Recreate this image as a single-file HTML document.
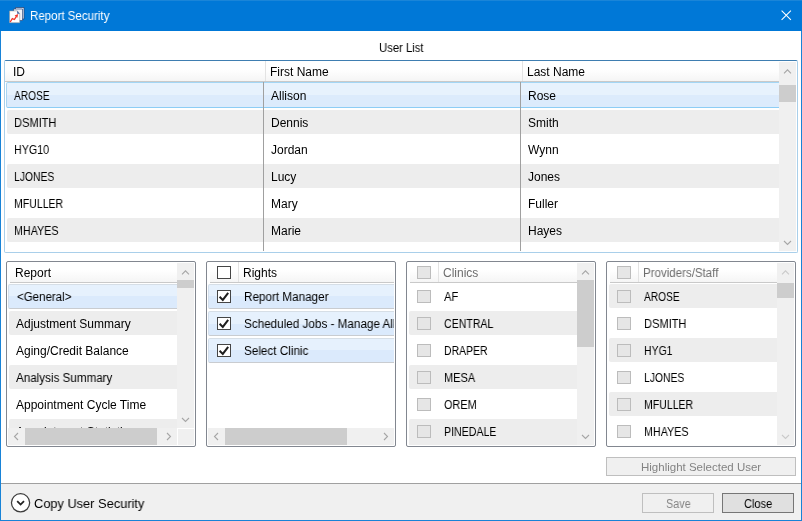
<!DOCTYPE html>
<html><head><meta charset="utf-8">
<style>
*{margin:0;padding:0;box-sizing:border-box}
html,body{width:802px;height:521px;overflow:hidden;background:#fff}
body{position:relative;font-family:"Liberation Sans",sans-serif;font-size:12px;color:#000}
.a{position:absolute}
.t{position:absolute;white-space:nowrap;will-change:transform;line-height:12px;font-size:12px;transform-origin:0 50%}
.gsel{position:absolute;border-top:1px solid #A3D6F5;border-bottom:1px solid #8DCDF5;border-left:1px solid #A9D5F2;background:linear-gradient(#E7F2FD,#E7F2FD 50%,#DCEBFC 50%,#DCEBFC);border-radius:2px 0 0 2px}
.psel{position:absolute;border:1px solid;border-color:#D6DEE6 #DAE6F2 #C9CCD0 #D3DFEC;background:linear-gradient(#E6F1FD,#E6F1FD 50%,#DBEAFC 50%,#DBEAFC);border-radius:2px}
.gry{position:absolute;background:#EDEDED;border-radius:2px}
.sb{position:absolute;background:#F0F0F0}
.th{position:absolute;background:#CDCDCD}
.pn{position:absolute;border:1px solid #828790;border-radius:2px}
.clip{position:absolute;overflow:hidden}
.hdr{position:absolute;background:linear-gradient(#fff,#fff 40%,#F5F5F5);border-bottom:1px solid #C9C9C9}
.cb{position:absolute;width:14px;height:13px;border:1px solid #454545;background:#fff}
.cbd{position:absolute;width:14px;height:13px;border:1px solid #BCBCBC;background:#E6E6E6}
</style></head><body>
<div class="a" style="left:0px;top:0px;width:802px;height:31px;background:#0078D7;"></div>
<div class="a" style="left:0px;top:0px;width:802px;height:1px;background:#1A85D8;"></div>
<div class="a" style="left:0px;top:31px;width:1px;height:490px;background:#1883D7;"></div>
<div class="a" style="left:801px;top:31px;width:1px;height:490px;background:#1883D7;"></div>
<div class="a" style="left:0px;top:520px;width:802px;height:1px;background:#1883D7;"></div>
<svg class="a" style="left:7px;top:5px" width="20" height="20" viewBox="0 0 20 20">
  <path d="M8.5 2.5 H17 V14 H8.5 Z" fill="#E6EAF4" stroke="#233D6B" stroke-width="0.7"/>
  <path d="M6.5 4 H15.5 V15.5 H6.5 Z" fill="#EEF1F8" stroke="#2D4A7E" stroke-width="0.7"/>
  <path d="M2.6 5.9 H10.3 L12.7 8.7 V17.7 H2.6 Z" fill="#fff" stroke="#9A9A9A" stroke-width="0.6"/>
  <path d="M10.2 5.8 L12.8 8.8 H10.2 Z" fill="#3D5E9E"/>
  <path d="M3.2 17 L5.3 13.6 L7.4 14.5 L9.4 11.3" fill="none" stroke="#F2372C" stroke-width="1.3"/>
  <path d="M7.6 10.4 L11.2 9 L10.4 12.8 Z" fill="#F2372C"/>
</svg>
<div class="t" style="left:30px;top:10px;color:#fff;transform:scaleX(0.96)">Report Security</div>
<svg class="a" style="left:781px;top:10px" width="11" height="11" viewBox="0 0 11 11"><path d="M0.6 0.6 L9.9 9.9 M9.9 0.6 L0.6 9.9" stroke="#fff" stroke-width="1.05"/></svg>
<div class="t" style="left:379px;top:42px;transform:scaleX(0.94)">User List</div>
<div class="a" style="left:4px;top:60px;width:794px;height:193px;border:1px solid;border-color:#3F7EB1 #A9CFEA #A9CFEA #A9CFEA;border-radius:2px"></div>
<div class="clip" style="left:5px;top:61px;width:774px;height:190px">
<div class="hdr" style="left:0px;top:0px;width:774px;height:21px;"></div>
<div class="a" style="left:260px;top:0px;width:1px;height:20px;background:#E3E3E3;"></div>
<div class="a" style="left:517px;top:0px;width:1px;height:20px;background:#E3E3E3;"></div>
<div class="t" style="left:8px;top:5px;">ID</div>
<div class="t" style="left:265px;top:5px;">First Name</div>
<div class="t" style="left:522px;top:5px;">Last Name</div>
<div class="gsel" style="left:1px;top:21px;width:780px;height:26px;"></div>
<div class="gry" style="left:2px;top:49px;width:780px;height:24px;"></div>
<div class="gry" style="left:2px;top:103px;width:780px;height:24px;"></div>
<div class="gry" style="left:2px;top:157px;width:780px;height:24px;"></div>
<div class="a" style="left:258px;top:21px;width:1px;height:169px;background:#A0A0A0;"></div>
<div class="a" style="left:515px;top:21px;width:1px;height:169px;background:#A0A0A0;"></div>
<div class="t" style="left:9px;top:29px;transform:scaleX(0.847);">AROSE</div>
<div class="t" style="left:266px;top:29px;">Allison</div>
<div class="t" style="left:523px;top:29px;">Rose</div>
<div class="t" style="left:9px;top:56px;transform:scaleX(0.922);">DSMITH</div>
<div class="t" style="left:266px;top:56px;">Dennis</div>
<div class="t" style="left:523px;top:56px;">Smith</div>
<div class="t" style="left:9px;top:83px;transform:scaleX(0.889);">HYG10</div>
<div class="t" style="left:266px;top:83px;">Jordan</div>
<div class="t" style="left:523px;top:83px;">Wynn</div>
<div class="t" style="left:9px;top:110px;transform:scaleX(0.861);">LJONES</div>
<div class="t" style="left:266px;top:110px;">Lucy</div>
<div class="t" style="left:523px;top:110px;">Jones</div>
<div class="t" style="left:9px;top:137px;transform:scaleX(0.878);">MFULLER</div>
<div class="t" style="left:266px;top:137px;">Mary</div>
<div class="t" style="left:523px;top:137px;">Fuller</div>
<div class="t" style="left:9px;top:164px;transform:scaleX(0.894);">MHAYES</div>
<div class="t" style="left:266px;top:164px;">Marie</div>
<div class="t" style="left:523px;top:164px;">Hayes</div>
</div>
<div class="sb" style="left:779px;top:62px;width:17px;height:189px;"></div>
<div class="th" style="left:779px;top:85px;width:17px;height:17px;"></div>
<svg class="a" style="left:782px;top:67px" width="11" height="8"><path d="M2 6.3 L5.5 2.8 L9 6.3" fill="none" stroke="#A6A6A6" stroke-width="1.1"/></svg>
<svg class="a" style="left:782px;top:239px" width="11" height="8"><path d="M2 2 L5.5 5.5 L9 2" fill="none" stroke="#A6A6A6" stroke-width="1.1"/></svg>
<div class="pn" style="left:6px;top:261px;width:190px;height:186px;"></div>
<div class="pn" style="left:206px;top:261px;width:190px;height:186px;"></div>
<div class="pn" style="left:406px;top:261px;width:190px;height:186px;"></div>
<div class="pn" style="left:606px;top:261px;width:190px;height:186px;"></div>
<div class="clip" style="left:7px;top:262px;width:170px;height:166px">
<div class="hdr" style="left:3px;top:0px;width:167px;height:21px;"></div>
<div class="psel" style="left:1px;top:22px;width:175px;height:25px;"></div>
<div class="gry" style="left:2px;top:49px;width:175px;height:24px;"></div>
<div class="gry" style="left:2px;top:103px;width:175px;height:24px;"></div>
<div class="gry" style="left:2px;top:157px;width:175px;height:24px;"></div>
<div class="t" style="left:8px;top:5px;">Report</div>
<div class="t" style="left:10px;top:29px;transform:scaleX(0.96)">&lt;General&gt;</div>
<div class="t" style="left:9px;top:56px;">Adjustment Summary</div>
<div class="t" style="left:9px;top:83px;">Aging/Credit Balance</div>
<div class="t" style="left:9px;top:110px;transform:scaleX(0.97)">Analysis Summary</div>
<div class="t" style="left:9px;top:137px;">Appointment Cycle Time</div>
<div class="t" style="left:9px;top:164px;">Appointment Statistics</div>
</div>
<div class="sb" style="left:177px;top:263px;width:17px;height:165px;"></div>
<div class="th" style="left:177px;top:280px;width:17px;height:8px;"></div>
<svg class="a" style="left:180px;top:268px" width="11" height="8"><path d="M2 6.3 L5.5 2.8 L9 6.3" fill="none" stroke="#A6A6A6" stroke-width="1.1"/></svg>
<svg class="a" style="left:180px;top:416px" width="11" height="8"><path d="M2 2 L5.5 5.5 L9 2" fill="none" stroke="#A6A6A6" stroke-width="1.1"/></svg>
<div class="sb" style="left:8px;top:428px;width:169px;height:17px;"></div>
<div class="th" style="left:25px;top:428px;width:132px;height:17px;"></div>
<svg class="a" style="left:12px;top:431px" width="8" height="11"><path d="M6 2 L2.5 5.5 L6 9" fill="none" stroke="#A6A6A6" stroke-width="1.1"/></svg>
<svg class="a" style="left:165px;top:431px" width="8" height="11"><path d="M2 2 L5.5 5.5 L2 9" fill="none" stroke="#A6A6A6" stroke-width="1.1"/></svg>
<div class="sb" style="left:178px;top:429px;width:16px;height:16px;"></div>
<div class="clip" style="left:207px;top:262px;width:187px;height:166px">
<div class="hdr" style="left:3px;top:0px;width:184px;height:21px;"></div>
<div class="cb" style="left:10px;top:4px;width:14px;height:13px;"></div>
<div class="a" style="left:31px;top:0px;width:1px;height:20px;background:#E3E3E3;"></div>
<div class="t" style="left:36px;top:5px;">Rights</div>
<div class="psel" style="left:1px;top:22px;width:195px;height:25px;"></div>
<div class="cb" style="left:10px;top:28px;width:14px;height:13px;"></div>
<svg class="a" style="left:10px;top:28px" width="14" height="13"><path d="M2.6 6.8 L5.8 9.9 L11.2 2.8" fill="none" stroke="#1E1E1E" stroke-width="2"/></svg>
<div class="t" style="left:37px;top:29px;transform:scaleX(0.975)">Report Manager</div>
<div class="psel" style="left:1px;top:49px;width:195px;height:25px;"></div>
<div class="cb" style="left:10px;top:55px;width:14px;height:13px;"></div>
<svg class="a" style="left:10px;top:55px" width="14" height="13"><path d="M2.6 6.8 L5.8 9.9 L11.2 2.8" fill="none" stroke="#1E1E1E" stroke-width="2"/></svg>
<div class="t" style="left:37px;top:56px;transform:scaleX(0.975)">Scheduled Jobs - Manage All</div>
<div class="psel" style="left:1px;top:76px;width:195px;height:25px;"></div>
<div class="cb" style="left:10px;top:82px;width:14px;height:13px;"></div>
<svg class="a" style="left:10px;top:82px" width="14" height="13"><path d="M2.6 6.8 L5.8 9.9 L11.2 2.8" fill="none" stroke="#1E1E1E" stroke-width="2"/></svg>
<div class="t" style="left:37px;top:83px;transform:scaleX(0.975)">Select Clinic</div>
</div>
<div class="sb" style="left:208px;top:428px;width:186px;height:17px;"></div>
<div class="th" style="left:225px;top:428px;width:122px;height:17px;"></div>
<svg class="a" style="left:212px;top:431px" width="8" height="11"><path d="M6 2 L2.5 5.5 L6 9" fill="none" stroke="#A6A6A6" stroke-width="1.1"/></svg>
<svg class="a" style="left:382px;top:431px" width="8" height="11"><path d="M2 2 L5.5 5.5 L2 9" fill="none" stroke="#A6A6A6" stroke-width="1.1"/></svg>
<div class="clip" style="left:407px;top:262px;width:170px;height:183px">
<div class="hdr" style="left:3px;top:0px;width:167px;height:21px;"></div>
<div class="cbd" style="left:10px;top:4px;width:14px;height:13px;"></div>
<div class="a" style="left:31px;top:0px;width:1px;height:20px;background:#E3E3E3;"></div>
<div class="t" style="left:36px;top:5px;color:#6D6D6D">Clinics</div>
<div class="gry" style="left:2px;top:49px;width:175px;height:24px;"></div>
<div class="gry" style="left:2px;top:103px;width:175px;height:24px;"></div>
<div class="gry" style="left:2px;top:157px;width:175px;height:30px;"></div>
<div class="cbd" style="left:10px;top:28px;width:14px;height:13px;"></div>
<div class="t" style="left:37px;top:29px;transform:scaleX(0.932);">AF</div>
<div class="cbd" style="left:10px;top:55px;width:14px;height:13px;"></div>
<div class="t" style="left:37px;top:56px;transform:scaleX(0.882);">CENTRAL</div>
<div class="cbd" style="left:10px;top:82px;width:14px;height:13px;"></div>
<div class="t" style="left:37px;top:83px;transform:scaleX(0.872);">DRAPER</div>
<div class="cbd" style="left:10px;top:109px;width:14px;height:13px;"></div>
<div class="t" style="left:37px;top:110px;transform:scaleX(0.917);">MESA</div>
<div class="cbd" style="left:10px;top:136px;width:14px;height:13px;"></div>
<div class="t" style="left:37px;top:137px;transform:scaleX(0.908);">OREM</div>
<div class="cbd" style="left:10px;top:163px;width:14px;height:13px;"></div>
<div class="t" style="left:37px;top:164px;transform:scaleX(0.883);">PINEDALE</div>
</div>
<div class="sb" style="left:577px;top:263px;width:17px;height:182px;"></div>
<div class="th" style="left:577px;top:280px;width:17px;height:67px;"></div>
<svg class="a" style="left:580px;top:268px" width="11" height="8"><path d="M2 6.3 L5.5 2.8 L9 6.3" fill="none" stroke="#A6A6A6" stroke-width="1.1"/></svg>
<svg class="a" style="left:580px;top:433px" width="11" height="8"><path d="M2 2 L5.5 5.5 L9 2" fill="none" stroke="#A6A6A6" stroke-width="1.1"/></svg>
<div class="clip" style="left:607px;top:262px;width:170px;height:183px">
<div class="hdr" style="left:3px;top:0px;width:167px;height:21px;"></div>
<div class="cbd" style="left:10px;top:4px;width:14px;height:13px;"></div>
<div class="a" style="left:31px;top:0px;width:1px;height:20px;background:#E3E3E3;"></div>
<div class="t" style="left:36px;top:5px;color:#6D6D6D;transform:scaleX(0.96)">Providers/Staff</div>
<div class="gry" style="left:2px;top:22px;width:175px;height:24px;"></div>
<div class="gry" style="left:2px;top:76px;width:175px;height:24px;"></div>
<div class="gry" style="left:2px;top:130px;width:175px;height:24px;"></div>
<div class="cbd" style="left:10px;top:28px;width:14px;height:13px;"></div>
<div class="t" style="left:37px;top:29px;transform:scaleX(0.847);">AROSE</div>
<div class="cbd" style="left:10px;top:55px;width:14px;height:13px;"></div>
<div class="t" style="left:37px;top:56px;transform:scaleX(0.922);">DSMITH</div>
<div class="cbd" style="left:10px;top:82px;width:14px;height:13px;"></div>
<div class="t" style="left:37px;top:83px;transform:scaleX(0.869);">HYG1</div>
<div class="cbd" style="left:10px;top:109px;width:14px;height:13px;"></div>
<div class="t" style="left:37px;top:110px;transform:scaleX(0.861);">LJONES</div>
<div class="cbd" style="left:10px;top:136px;width:14px;height:13px;"></div>
<div class="t" style="left:37px;top:137px;transform:scaleX(0.878);">MFULLER</div>
<div class="cbd" style="left:10px;top:163px;width:14px;height:13px;"></div>
<div class="t" style="left:37px;top:164px;transform:scaleX(0.894);">MHAYES</div>
</div>
<div class="sb" style="left:777px;top:263px;width:17px;height:182px;"></div>
<div class="th" style="left:777px;top:283px;width:17px;height:15px;"></div>
<svg class="a" style="left:780px;top:268px" width="11" height="8"><path d="M2 6.3 L5.5 2.8 L9 6.3" fill="none" stroke="#CACACA" stroke-width="1.1"/></svg>
<svg class="a" style="left:780px;top:433px" width="11" height="8"><path d="M2 2 L5.5 5.5 L9 2" fill="none" stroke="#CACACA" stroke-width="1.1"/></svg>
<div class="a" style="left:606px;top:457px;width:190px;height:19px;border:1px solid #BFBFBF;background:#F0F0F0"></div>
<div class="t" style="left:641px;top:461px;color:#838383;font-size:11.5px">Highlight Selected User</div>
<div class="a" style="left:1px;top:483px;width:800px;height:37px;background:#F0F0F0;border-top:1px solid #A0A0A0"></div>
<svg class="a" style="left:10px;top:492px" width="22" height="22"><circle cx="10.55" cy="10.8" r="9.1" fill="#fff" stroke="#3C3C3C" stroke-width="1.25"/><path d="M7.2 9.2 L10.6 12.6 L14 9.2" fill="none" stroke="#222" stroke-width="1.8"/></svg>
<div class="t" style="left:34px;top:498px;font-size:13px;transform:scaleX(0.985)">Copy User Security</div>
<div class="a" style="left:642px;top:493px;width:72px;height:20px;border:1px solid #BFBFBF;background:#F0F0F0"></div>
<div class="t" style="left:666px;top:498px;color:#838383;transform:scaleX(0.9)">Save</div>
<div class="a" style="left:722px;top:493px;width:72px;height:20px;border:1px solid #767676;background:#E0E0E0"></div>
<div class="t" style="left:744px;top:498px;transform:scaleX(0.92)">Close</div>
</body></html>
